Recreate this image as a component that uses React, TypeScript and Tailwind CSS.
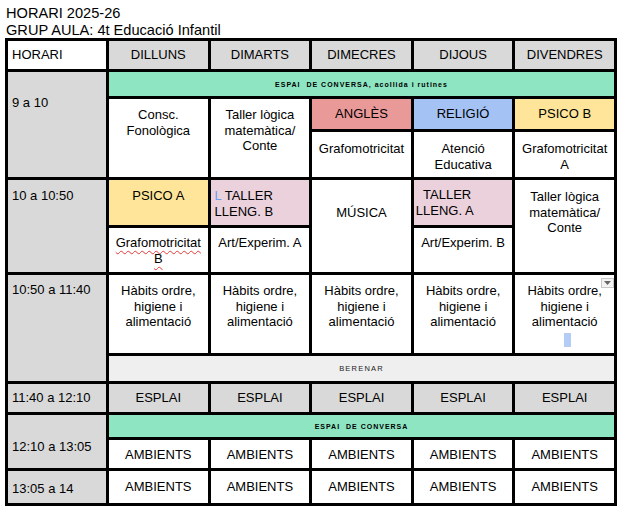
import React from "react";

const day = "bg-[#d9d9d9] flex items-center justify-center";
const time = "bg-[#d9d9d9] col-start-1 pl-[4px]";
const wtop = "bg-white text-center";

export default function App() {
  return (
    <div className="w-[620px] h-[507px] bg-white text-black font-['Liberation_Sans',Arial,sans-serif] text-[13px] leading-[15.5px]">
      <div className="h-[38px] pt-[5px] pl-[6px] text-[14.6px] leading-[17px]">
        <div>HORARI 2025-26</div>
        <div>GRUP AULA: 4t Educació Infantil</div>
      </div>
      <div className="ml-[5px] w-[612px] bg-black p-[3px] grid gap-[3px] grid-cols-[98px_repeat(5,minmax(0,1fr))] grid-rows-[28px_24px_30px_45px_45px_44px_78px_25px_28px_22px_28px_32px]">
        {/* header */}
        <div className="col-start-1 row-start-1 bg-white flex items-center pl-[4px]">HORARI</div>
        <div className={`col-start-2 row-start-1 ${day}`}>DILLUNS</div>
        <div className={`col-start-3 row-start-1 ${day}`}>DIMARTS</div>
        <div className={`col-start-4 row-start-1 ${day}`}>DIMECRES</div>
        <div className={`col-start-5 row-start-1 ${day}`}>DIJOUS</div>
        <div className={`col-start-6 row-start-1 ${day}`}>DIVENDRES</div>

        {/* 9 a 10 */}
        <div className={`${time} row-start-2 row-span-3 pt-[23px]`}>9 a 10</div>
        <div className="col-start-2 col-span-5 row-start-2 bg-[#8ee5c1] flex items-center justify-center text-[7px] font-bold tracking-[1px] leading-none">
          ESPAI&nbsp; DE CONVERSA, acollida i rutines
        </div>
        <div className={`col-start-2 row-start-3 row-span-2 pt-[8px] ${wtop}`}>
          Consc.<br />Fonològica
        </div>
        <div className={`col-start-3 row-start-3 row-span-2 pt-[8px] ${wtop}`}>
          Taller lògica<br />matemàtica/<br />Conte
        </div>
        <div className="col-start-4 row-start-3 bg-[#ea9999] flex items-center justify-center">ANGLÈS</div>
        <div className="col-start-5 row-start-3 bg-[#a4c2f4] flex items-center justify-center">RELIGIÓ</div>
        <div className="col-start-6 row-start-3 bg-[#ffe599] flex items-center justify-center">PSICO B</div>
        <div className={`col-start-4 row-start-4 pt-[9px] ${wtop}`}>Grafomotricitat</div>
        <div className={`col-start-5 row-start-4 pt-[9px] ${wtop}`}>
          Atenció<br />Educativa
        </div>
        <div className={`col-start-6 row-start-4 pt-[9px] ${wtop}`}>
          Grafomotricitat<br />A
        </div>

        {/* 10 a 10:50 */}
        <div className={`${time} row-start-5 row-span-2 pt-[8px]`}>10 a 10:50</div>
        <div className="col-start-2 row-start-5 bg-[#ffe599] text-center pt-[8px]">PSICO A</div>
        <div className="col-start-3 row-start-5 bg-[#ead1dc] pt-[8px] pl-[4px]">
          <span className="text-[#6d9eeb]">L</span> TALLER<br />LLENG. B
        </div>
        <div className={`col-start-4 row-start-5 row-span-2 pt-[25px] ${wtop}`}>MÚSICA</div>
        <div className="col-start-5 row-start-5 bg-[#ead1dc] pt-[7px] pl-[2px]">
          &nbsp;&nbsp;TALLER<br />LLENG. A
        </div>
        <div className={`col-start-6 row-start-5 row-span-2 pt-[9px] ${wtop}`}>
          Taller lògica<br />matemàtica/<br />Conte
        </div>
        <div className={`col-start-2 row-start-6 pt-[7px] ${wtop}`}>
          <span className="underline decoration-wavy decoration-[#e53935] decoration-1 underline-offset-[3px]">Grafomotricitat</span>
          <br />
          <span className="underline decoration-wavy decoration-[#e53935] decoration-1 underline-offset-[3px]">B</span>
        </div>
        <div className={`col-start-3 row-start-6 pt-[7px] ${wtop}`}>Art/Experim. A</div>
        <div className={`col-start-5 row-start-6 pt-[7px] ${wtop}`}>Art/Experim. B</div>

        {/* 10:50 a 11:40 */}
        <div className={`${time} row-start-7 row-span-2 pt-[7px]`}>10:50 a 11:40</div>
        <div className={`col-start-2 row-start-7 pt-[8px] ${wtop}`}>
          Hàbits ordre,<br />higiene i<br />alimentació
        </div>
        <div className={`col-start-3 row-start-7 pt-[8px] ${wtop}`}>
          Hàbits ordre,<br />higiene i<br />alimentació
        </div>
        <div className={`col-start-4 row-start-7 pt-[8px] ${wtop}`}>
          Hàbits ordre,<br />higiene i<br />alimentació
        </div>
        <div className={`col-start-5 row-start-7 pt-[8px] ${wtop}`}>
          Hàbits ordre,<br />higiene i<br />alimentació
        </div>
        <div className={`col-start-6 row-start-7 pt-[8px] relative ${wtop}`}>
          Hàbits ordre,<br />higiene i<br />alimentació
          <div className="absolute left-[86px] top-[3px] w-[13px] h-[10px] bg-[#f3f3f3] border border-[#c8c8c8] flex items-center justify-center">
            <svg width="7" height="4" viewBox="0 0 7 4">
              <path d="M0 0 L7 0 L3.5 4 Z" fill="#666" />
            </svg>
          </div>
          <div className="absolute left-[49px] top-[58px] w-[7px] h-[14px] bg-[#b3cdf7]" />
        </div>
        <div className="col-start-2 col-span-5 row-start-8 bg-[#efefef] flex items-center justify-center text-[7.5px] tracking-[1.2px] leading-none text-[#222]">
          BERENAR
        </div>

        {/* 11:40 a 12:10 */}
        <div className={`${time} row-start-9 flex items-center`}>11:40 a 12:10</div>
        <div className={`col-start-2 row-start-9 ${day}`}>ESPLAI</div>
        <div className={`col-start-3 row-start-9 ${day}`}>ESPLAI</div>
        <div className={`col-start-4 row-start-9 ${day}`}>ESPLAI</div>
        <div className={`col-start-5 row-start-9 ${day}`}>ESPLAI</div>
        <div className={`col-start-6 row-start-9 ${day}`}>ESPLAI</div>

        {/* 12:10 a 13:05 */}
        <div className={`${time} row-start-10 row-span-2 pt-[24px]`}>12:10 a 13:05</div>
        <div className="col-start-2 col-span-5 row-start-10 bg-[#8ee5c1] flex items-center justify-center text-[7px] font-bold tracking-[1px] leading-none">
          ESPAI&nbsp; DE CONVERSA
        </div>
        <div className="col-start-2 row-start-11 bg-white flex items-center justify-center pt-[2px]">AMBIENTS</div>
        <div className="col-start-3 row-start-11 bg-white flex items-center justify-center pt-[2px]">AMBIENTS</div>
        <div className="col-start-4 row-start-11 bg-white flex items-center justify-center pt-[2px]">AMBIENTS</div>
        <div className="col-start-5 row-start-11 bg-white flex items-center justify-center pt-[2px]">AMBIENTS</div>
        <div className="col-start-6 row-start-11 bg-white flex items-center justify-center pt-[2px]">AMBIENTS</div>

        {/* 13:05 a 14 */}
        <div className={`${time} row-start-12 flex items-center pt-[3px]`}>13:05 a 14</div>
        <div className="col-start-2 row-start-12 bg-white flex items-center justify-center">AMBIENTS</div>
        <div className="col-start-3 row-start-12 bg-white flex items-center justify-center">AMBIENTS</div>
        <div className="col-start-4 row-start-12 bg-white flex items-center justify-center">AMBIENTS</div>
        <div className="col-start-5 row-start-12 bg-white flex items-center justify-center">AMBIENTS</div>
        <div className="col-start-6 row-start-12 bg-white flex items-center justify-center">AMBIENTS</div>
      </div>
    </div>
  );
}
